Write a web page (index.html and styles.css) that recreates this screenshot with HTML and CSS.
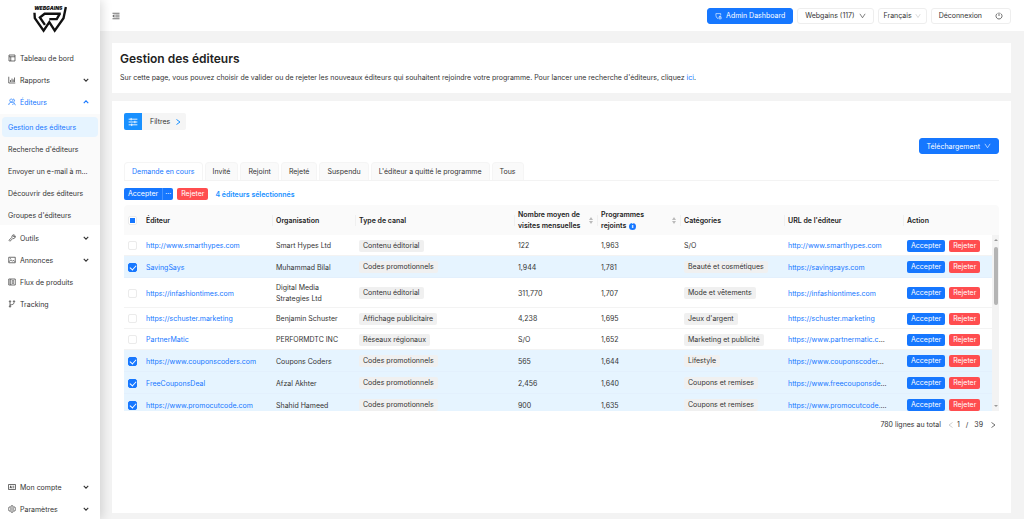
FILE: index.html
```
<!DOCTYPE html>
<html lang="fr">
<head>
  <meta charset="UTF-8" />
  <meta name="viewport" content="width=device-width, initial-scale=1.0"/>
  <title>Gestion des éditeurs</title>
  <link rel="stylesheet" href="styles.css">
</head>
<body>

  <!-- Icons -->
  <svg class="sprite" aria-hidden="true">
    <symbol id="down" viewBox="0 0 16 16"><path d="M2 3l6 9 6-9"/></symbol>
    <symbol id="chevron" viewBox="0 0 16 16"><path d="M2 5l6 6 6-6"/></symbol>
    <symbol id="right" viewBox="0 0 16 16"><path d="M5 3l7 5-7 5"/></symbol>
    <symbol id="left" viewBox="0 0 16 16"><path d="M11 3L4 8l7 5"/></symbol>
    <symbol id="layout" viewBox="0 0 16 16"><path d="M2 2h12v12H2zM2 5.500h12M5.500 5.500V14"/></symbol>
    <symbol id="chart" viewBox="0 0 16 16"><path d="M1.500 1.500v12.500h13M5 12V8M8 12V5M10.500 12V7M13 12V3"/></symbol>
    <symbol id="users" viewBox="0 0 16 16"><path d="M6.500 2a3 3 0 1 0 .1 0M1.500 14c0-3 2-5.500 5-5.500 1.500 0 2.500.5 3.500 1.500M10 2c4 0 4 5.500 1 5.700M11 8l4 6.500M9 14l2-3"/></symbol>
    <symbol id="tool" viewBox="0 0 16 16"><path d="M2 12.500l6-6c-1-3 2-6 5-4.500l-2.500 2.500 1.500 1.500L14.500 4c1 3-2 6-5 5l-5.500 5.500z"/></symbol>
    <symbol id="picture" viewBox="0 0 16 16"><path d="M1.500 2.500h13v11h-13zM2 11.500l4-4 3 3 2-2 3 3M4.500 5h1.500"/></symbol>
    <symbol id="feed" viewBox="0 0 16 16"><path d="M1.500 2h13v12h-13zM5.500 2v12M8 5.500h4M8 8h4M8 10.500h4M3 5.500h1M3 8h1M3 10.500h1"/></symbol>
    <symbol id="branch" viewBox="0 0 16 16"><path d="M4 4.500v7M4 10c5-1 8-1 8-5M4 1.500a1.500 1.500 0 1 0 .1 0M4 11.500a1.500 1.500 0 1 0 .1 0M12 1.500a1.500 1.500 0 1 0 .1 0"/></symbol>
    <symbol id="card" viewBox="0 0 16 16"><path d="M1 3h14v10H1zM4 10.500l1.500-5 1.500 5M4.500 9h2M9 6.500h3.500M9 9.500h3.500"/></symbol>
    <symbol id="gear" viewBox="0 0 16 16"><path d="M6.500 1.500h3l.5 2 1.500 1 2-.7 1.500 2.700L13.500 8l1.500 1.500-1.500 2.700-2-.7-1.500 1-.5 2h-3l-.5-2-1.500-1-2 .7L1 9.500 2.500 8 1 6.500l1.500-2.700 2 .7 1.500-1zM8 5.500a2.500 2.500 0 1 0 .1 0"/></symbol>
    <symbol id="fold" viewBox="0 0 16 16"><path d="M1 2.500h14M6.500 6.200H15M6.500 9.800H15M1 13.500h14M4 5.500L1.500 8 4 10.500z"/></symbol>
    <symbol id="shield" viewBox="0 0 16 16"><path d="M7 14C3 12 2 10 2 2.500h11v4M9 10.500h5v4H9zM10 10.500V8.500h3v2"/></symbol>
    <symbol id="power" viewBox="0 0 16 16"><path d="M5 2.800a6 6 0 1 0 6 0M8 1v7"/></symbol>
    <symbol id="sliders" viewBox="0 0 16 16"><path d="M1 3.500h14M1 8h14M1 12.500h14M5 1.500v4M11 6v4M6 10.500v4"/></symbol>
  </svg>

  <div class="layout">
    <aside class="sidebar">
      <div class="logo">
        <svg viewBox="0 0 100 80" role="img" aria-label="Webgains">
          <text x="3" y="13">WEBGAINS</text>
          <path d="M4 20l1 16 26 37 17-25 16 25 26-37 7-33M82 23H34L20 34l15 22M78 25l-8 14H48"/>
        </svg>
      </div>
      <nav class="menu">
        <a href="#"><svg><use href="#layout"/></svg>Tableau de bord</a>
        <a href="#"><svg><use href="#chart"/></svg>Rapports<svg class="arrow"><use href="#chevron"/></svg></a>
        <a href="#" class="open"><svg><use href="#users"/></svg>Éditeurs<svg class="arrow"><use href="#chevron"/></svg></a>
        <div class="submenu">
          <a href="#" class="active">Gestion des éditeurs</a>
          <a href="#">Recherche d'éditeurs</a>
          <a href="#">Envoyer un e-mail à m...</a>
          <a href="#">Découvrir des éditeurs</a>
          <a href="#">Groupes d'éditeurs</a>
        </div>
        <a href="#"><svg><use href="#tool"/></svg>Outils<svg class="arrow"><use href="#chevron"/></svg></a>
        <a href="#"><svg><use href="#picture"/></svg>Annonces<svg class="arrow"><use href="#chevron"/></svg></a>
        <a href="#"><svg><use href="#feed"/></svg>Flux de produits</a>
        <a href="#"><svg><use href="#branch"/></svg>Tracking</a>
      </nav>
      <nav class="menu menu-bottom">
        <a href="#"><svg><use href="#card"/></svg>Mon compte<svg class="arrow"><use href="#chevron"/></svg></a>
        <a href="#"><svg><use href="#gear"/></svg>Paramètres<svg class="arrow"><use href="#chevron"/></svg></a>
      </nav>
    </aside>

    <div class="main">
      <header class="topbar">
        <button class="fold" aria-label="Menu"><svg><use href="#fold"/></svg></button>
        <div class="topbar-right">
          <button class="btn primary"><svg><use href="#shield"/></svg>Admin Dashboard</button>
          <button class="btn">Webgains (117)<svg><use href="#down"/></svg></button>
          <button class="btn lang">Français<svg><use href="#down"/></svg></button>
          <button class="btn logout">Déconnexion<svg><use href="#power"/></svg></button>
        </div>
      </header>

      <section class="card intro">
        <h1>Gestion des éditeurs</h1>
        <p>Sur cette page, vous pouvez choisir de valider ou de rejeter les nouveaux éditeurs qui souhaitent rejoindre votre programme. Pour lancer une recherche d'éditeurs, cliquez <a href="#">ici</a>.</p>
      </section>

      <section class="card content">
        <button class="filter">
          <span class="filter-icon"><svg><use href="#sliders"/></svg></span>
          Filtres
          <svg class="filter-arrow"><use href="#right"/></svg>
        </button>

        <div class="download">
          <button class="btn primary">Téléchargement<svg><use href="#down"/></svg></button>
        </div>

        <div class="tabs">
          <button class="current">Demande en cours</button>
          <button>Invité</button>
          <button>Rejoint</button>
          <button>Rejeté</button>
          <button>Suspendu</button>
          <button>L'éditeur a quitté le programme</button>
          <button>Tous</button>
        </div>

        <div class="bulk">
          <div class="split">
            <button class="small accept">Accepter</button><button class="small accept more" aria-label="Plus">···</button>
          </div>
          <button class="small reject">Rejeter</button>
          <span class="count">4 éditeurs sélectionnés</span>
        </div>

        <table class="head">
          <colgroup><col class="c-check"><col class="c-editor"><col class="c-org"><col class="c-type"><col class="c-visits"><col class="c-prog"><col class="c-cat"><col class="c-url"><col class="c-action"><col class="c-scroll"></colgroup>
          <thead>
            <tr>
              <th><input type="checkbox" class="partial" aria-label="Tout sélectionner"></th>
              <th class="first">Éditeur</th>
              <th>Organisation</th>
              <th>Type de canal</th>
              <th><div class="sortable"><span>Nombre moyen de visites mensuelles</span><i class="sorter"></i></div></th>
              <th><div class="sortable"><span>Programmes<br>rejoints <b class="info">i</b></span><i class="sorter"></i></div></th>
              <th>Catégories</th>
              <th>URL de l'éditeur</th>
              <th>Action</th>
              <th class="first"></th>
            </tr>
          </thead>
        </table>

        <div class="body">
          <div class="rows">
            <table>
              <colgroup><col class="c-check"><col class="c-editor"><col class="c-org"><col class="c-type"><col class="c-visits"><col class="c-prog"><col class="c-cat"><col class="c-url"><col class="c-action"></colgroup>
              <tbody>
                <tr>
                  <td><input type="checkbox" aria-label="http://www.smarthypes.com"></td>
                  <td><a href="#">http://www.smarthypes.com</a></td>
                  <td>Smart Hypes Ltd</td>
                  <td><span class="tag">Contenu éditorial</span></td>
                  <td>122</td>
                  <td>1,963</td>
                  <td>S/O</td>
                  <td><a href="#">http://www.smarthypes.com</a></td>
                  <td><div class="actions"><button class="small accept">Accepter</button><button class="small reject">Rejeter</button></div></td>
                </tr>
                <tr class="selected">
                  <td><input type="checkbox" aria-label="SavingSays" checked></td>
                  <td><a href="#">SavingSays</a></td>
                  <td>Muhammad Bilal</td>
                  <td><span class="tag">Codes promotionnels</span></td>
                  <td>1,944</td>
                  <td>1,781</td>
                  <td><span class="tag">Beauté et cosmétiques</span></td>
                  <td><a href="#">https://savingsays.com</a></td>
                  <td><div class="actions"><button class="small accept">Accepter</button><button class="small reject">Rejeter</button></div></td>
                </tr>
                <tr>
                  <td><input type="checkbox" aria-label="https://infashiontimes.com"></td>
                  <td><a href="#">https://infashiontimes.com</a></td>
                  <td class="wrap">Digital Media Strategies Ltd</td>
                  <td><span class="tag">Contenu éditorial</span></td>
                  <td>311,770</td>
                  <td>1,707</td>
                  <td><span class="tag">Mode et vêtements</span></td>
                  <td><a href="#">https://infashiontimes.com</a></td>
                  <td><div class="actions"><button class="small accept">Accepter</button><button class="small reject">Rejeter</button></div></td>
                </tr>
                <tr>
                  <td><input type="checkbox" aria-label="https://schuster.marketing"></td>
                  <td><a href="#">https://schuster.marketing</a></td>
                  <td>Benjamin Schuster</td>
                  <td><span class="tag">Affichage publicitaire</span></td>
                  <td>4,238</td>
                  <td>1,695</td>
                  <td><span class="tag">Jeux d'argent</span></td>
                  <td><a href="#">https://schuster.marketing</a></td>
                  <td><div class="actions"><button class="small accept">Accepter</button><button class="small reject">Rejeter</button></div></td>
                </tr>
                <tr>
                  <td><input type="checkbox" aria-label="PartnerMatic"></td>
                  <td><a href="#">PartnerMatic</a></td>
                  <td>PERFORMDTC INC</td>
                  <td><span class="tag">Réseaux régionaux</span></td>
                  <td>S/O</td>
                  <td>1,652</td>
                  <td><span class="tag">Marketing et publicité</span></td>
                  <td><a href="#">https://www.partnermatic.c</a>...</td>
                  <td><div class="actions"><button class="small accept">Accepter</button><button class="small reject">Rejeter</button></div></td>
                </tr>
                <tr class="selected">
                  <td><input type="checkbox" aria-label="https://www.couponscoders.com" checked></td>
                  <td><a href="#">https://www.couponscoders.com</a></td>
                  <td>Coupons Coders</td>
                  <td><span class="tag">Codes promotionnels</span></td>
                  <td>565</td>
                  <td>1,644</td>
                  <td><span class="tag">Lifestyle</span></td>
                  <td><a href="#">https://www.couponscoder</a>...</td>
                  <td><div class="actions"><button class="small accept">Accepter</button><button class="small reject">Rejeter</button></div></td>
                </tr>
                <tr class="selected">
                  <td><input type="checkbox" aria-label="FreeCouponsDeal" checked></td>
                  <td><a href="#">FreeCouponsDeal</a></td>
                  <td>Afzal Akhter</td>
                  <td><span class="tag">Codes promotionnels</span></td>
                  <td>2,456</td>
                  <td>1,640</td>
                  <td><span class="tag">Coupons et remises</span></td>
                  <td><a href="#">https://www.freecouponsde</a>...</td>
                  <td><div class="actions"><button class="small accept">Accepter</button><button class="small reject">Rejeter</button></div></td>
                </tr>
                <tr class="selected">
                  <td><input type="checkbox" aria-label="https://www.promocutcode.com" checked></td>
                  <td><a href="#">https://www.promocutcode.com</a></td>
                  <td>Shahid Hameed</td>
                  <td><span class="tag">Codes promotionnels</span></td>
                  <td>900</td>
                  <td>1,635</td>
                  <td><span class="tag">Coupons et remises</span></td>
                  <td><a href="#">https://www.promocutcode.</a>...</td>
                  <td><div class="actions"><button class="small accept">Accepter</button><button class="small reject">Rejeter</button></div></td>
                </tr>
              </tbody>
            </table>
          </div>
          <div class="scrollbar"><i class="up"></i><i class="thumb"></i><i class="dn"></i></div>
        </div>

        <div class="pagination">
          <span>780 lignes au total</span>
          <button class="off" aria-label="Page précédente"><svg><use href="#left"/></svg></button>
          <span class="pages"><span>1</span><span>/</span><span>39</span></span>
          <button aria-label="Page suivante"><svg><use href="#right"/></svg></button>
        </div>
      </section>
    </div>
  </div>

</body>
</html>
```
FILE: styles.css
```
* {
  box-sizing: border-box;
  margin: 0;
  padding: 0;
}
body {
  background: #f3f3f3;
  color: #333;
  font-family: Inter, sans-serif;
  font-size: 7px;
  line-height: 11px;
}
a {
  color: #1677ff;
  text-decoration: none;
}
button {
  font: inherit;
  color: inherit;
  border: none;
  background: none;
  cursor: pointer;
}
svg {
  width: 8px;
  height: 8px;
  fill: none;
  stroke: currentColor;
  stroke-width: 1.4;
  flex: none;
}
.sprite {
  display: none;
}
.layout {
  display: flex;
  height: 100vh;
}

/* Sidebar */
.sidebar {
  width: 100px;
  flex: none;
  display: flex;
  flex-direction: column;
  background: white;
  box-shadow: 2px 0 10px rgba(0, 0, 0, 0.15);
  overflow: hidden;
  z-index: 1;
}
.logo {
  height: 47px;
  padding: 6px 0 0 33px;
}
.logo svg {
  width: 34px;
  height: 27px;
  color: #111;
  stroke-width: 7;
}
.logo text {
  font: italic 900 15px Inter, sans-serif;
  fill: #111;
  stroke: none;
}
.menu a {
  display: flex;
  align-items: center;
  gap: 4px;
  height: 22px;
  padding: 0 11px 0 8px;
  color: #333;
  white-space: nowrap;
}
.menu .arrow {
  width: 6px;
  height: 6px;
  margin-left: auto;
  stroke-width: 3;
}
.menu a.open {
  color: #1677ff;
}
.menu a.open .arrow {
  transform: rotate(180deg);
}
.submenu {
  background: #fafafa;
  padding-top: 3px;
  margin-top: 1px;
}
.submenu a {
  height: 20px;
  margin: 0 2px 2px;
  padding: 0 6px;
  border-radius: 4px;
}
.submenu a.active {
  background: #e6f4ff;
  color: #1677ff;
}
.menu-bottom {
  margin: auto 0 -1px;
}

/* Top bar */
.main {
  flex: 1;
  min-width: 0;
  display: flex;
  flex-direction: column;
}
.topbar {
  display: flex;
  align-items: center;
  justify-content: space-between;
  height: 31px;
  padding: 0 13px 0 12px;
  background: white;
  flex: none;
}
.fold {
  display: flex;
}
.topbar-right {
  display: flex;
  gap: 4px;
}
.btn {
  display: flex;
  align-items: center;
  gap: 4px;
  height: 16px;
  padding: 0 7px;
  border: 1px solid #eee;
  border-radius: 3px;
  white-space: nowrap;
}
.btn svg {
  width: 7px;
}
.btn.primary {
  background: #1677ff;
  border-color: #1677ff;
  color: white;
}
.btn.lang {
  gap: 3px;
  padding: 0 5px;
}
.btn.lang svg {
  color: #bbb;
  width: 6px;
}
.btn.logout {
  gap: 13px;
}
.btn.logout svg {
  width: 8px;
}

/* Cards */
.card {
  background: white;
  margin: 0 13px 0 12px;
}
.intro {
  margin-top: 12px;
  padding: 8px 8px 10px;
}
.intro h1 {
  font-size: 12px;
  line-height: 16px;
  font-weight: 600;
  color: #222;
  margin-bottom: 5px;
}
.content {
  flex: 1;
  margin-top: 8px;
  margin-bottom: 6px;
  padding: 12px;
}
.filter {
  display: flex;
  align-items: center;
  height: 17px;
  padding-right: 4px;
  background: #f5f5f5;
  border-radius: 2px;
}
.filter-icon {
  display: flex;
  align-items: center;
  justify-content: center;
  width: 18px;
  height: 17px;
  margin-right: 8px;
  background: #1890ff;
  color: white;
  border-radius: 2px 0 0 2px;
}
.filter-icon svg {
  width: 10px;
  height: 10px;
}
.filter-arrow {
  margin-left: 4px;
  color: #1890ff;
  stroke-width: 2;
}
.download {
  display: flex;
  justify-content: flex-end;
  margin: 8px 0;
}

/* Tabs */
.tabs {
  display: flex;
  gap: 2px;
  border-bottom: 1px solid #f3f3f3;
}
.tabs button {
  height: 18px;
  padding: 0 7px;
  background: #fafafa;
  border: 1px solid #f5f5f5;
  border-bottom: none;
  border-radius: 4px 4px 0 0;
  white-space: nowrap;
}
.tabs .current {
  background: white;
  color: #1677ff;
}

.bulk {
  display: flex;
  align-items: center;
  gap: 4px;
  margin: 7px 0 5px;
}
.split {
  display: flex;
}
.small {
  height: 12px;
  padding: 0 4px;
  line-height: 12px;
  color: white;
  border-radius: 2px;
}
.accept {
  background: #1677ff;
}
.reject {
  background: #ff4d4f;
}
.split .accept {
  border-radius: 2px 0 0 2px;
}
.split .more {
  padding: 0 2px;
  border-left: 1px solid #4593ff;
  border-radius: 0 2px 2px 0;
}
.count {
  margin-left: 3px;
  color: #1890ff;
  font-weight: 600;
}

/* Table */
table {
  width: 100%;
  table-layout: fixed;
  border-collapse: separate;
  border-spacing: 0;
}
.c-check { width: 18px; }
.c-editor { width: 130px; }
.c-org { width: 83px; }
.c-type { width: 159px; }
.c-visits { width: 83px; }
.c-prog { width: 83px; }
.c-cat { width: 104px; }
.c-url { width: 119px; }
.c-action { width: 89px; }
.c-scroll { width: 7px; }
th {
  position: relative;
  height: 30px;
  padding: 0 4px;
  background: #fafafa;
  text-align: left;
  font-weight: 600;
  color: #222;
}
th:nth-child(n+3)::before {
  content: "";
  position: absolute;
  left: 0;
  top: 10px;
  width: 1px;
  height: 11px;
  background: #f0f0f0;
}
th.first::before {
  display: none;
}
th:first-child {
  border-radius: 4px 0 0 0;
}
th:last-child {
  padding: 0;
  border-radius: 0 4px 0 0;
}
.sortable {
  display: flex;
  align-items: center;
  justify-content: space-between;
}
.sorter::before,
.sorter::after {
  content: "";
  display: block;
  border: 2px solid transparent;
}
.sorter::before {
  border-bottom: 3px solid #bbb;
  border-top: none;
  margin-bottom: 1px;
}
.sorter::after {
  border-top: 3px solid #bbb;
  border-bottom: none;
}
.info {
  display: inline-block;
  width: 7px;
  height: 7px;
  margin-left: 1px;
  border-radius: 50%;
  background: #1677ff;
  color: white;
  font-size: 5px;
  line-height: 7px;
  text-align: center;
  vertical-align: middle;
}
td {
  height: 21px;
  padding: 1px 4px 0;
  border-bottom: 1px solid #f3f3f3;
  white-space: nowrap;
}
td.wrap {
  height: 30px;
  white-space: normal;
}
.selected td {
  height: 22px;
  background: #e6f4ff;
  border-color: #e3f0fd;
}
.tag {
  display: inline-block;
  height: 12px;
  padding: 0 4px;
  line-height: 12px;
  background: #f0f0f0;
  border-radius: 2px;
  vertical-align: middle;
}
.actions {
  display: flex;
  gap: 4px;
}
input[type="checkbox"] {
  appearance: none;
  display: block;
  width: 9px;
  height: 9px;
  border: 1px solid #ebebeb;
  border-radius: 2px;
  background: white;
}
input[type="checkbox"]:checked {
  background: #1677ff;
  border-color: #1677ff;
}
input[type="checkbox"]:checked::before {
  content: "";
  display: block;
  width: 3px;
  height: 5px;
  margin: 0 0 0 2px;
  border: solid white;
  border-width: 0 1px 1px 0;
  transform: rotate(42deg);
}
input.partial::before {
  content: "";
  display: block;
  width: 5px;
  height: 5px;
  margin: 1px;
  background: #1677ff;
}
.body {
  display: flex;
  height: 176px;
}
.rows {
  flex: 1;
  overflow: hidden;
}
.scrollbar {
  display: flex;
  flex-direction: column;
  align-items: center;
  width: 7px;
  padding: 4px 0;
  background: #f3f3f3;
}
.scrollbar .up {
  border: 2px solid transparent;
  border-top: none;
  border-bottom-color: #999;
}
.scrollbar .thumb {
  width: 4px;
  height: 58px;
  margin-top: 6px;
  border-radius: 2px;
  background: #b4b4b4;
}
.scrollbar .dn {
  margin-top: auto;
  border: 2px solid transparent;
  border-bottom: none;
  border-top-color: #999;
}

.pagination {
  display: flex;
  align-items: center;
  justify-content: flex-end;
  margin-top: 8px;
  padding-right: 2px;
}
.pagination button {
  display: flex;
}
.pagination .off {
  margin: 0 2px 0 6px;
  color: #bbb;
}
.pages {
  display: flex;
  gap: 6px;
  margin-right: 6px;
}
```
